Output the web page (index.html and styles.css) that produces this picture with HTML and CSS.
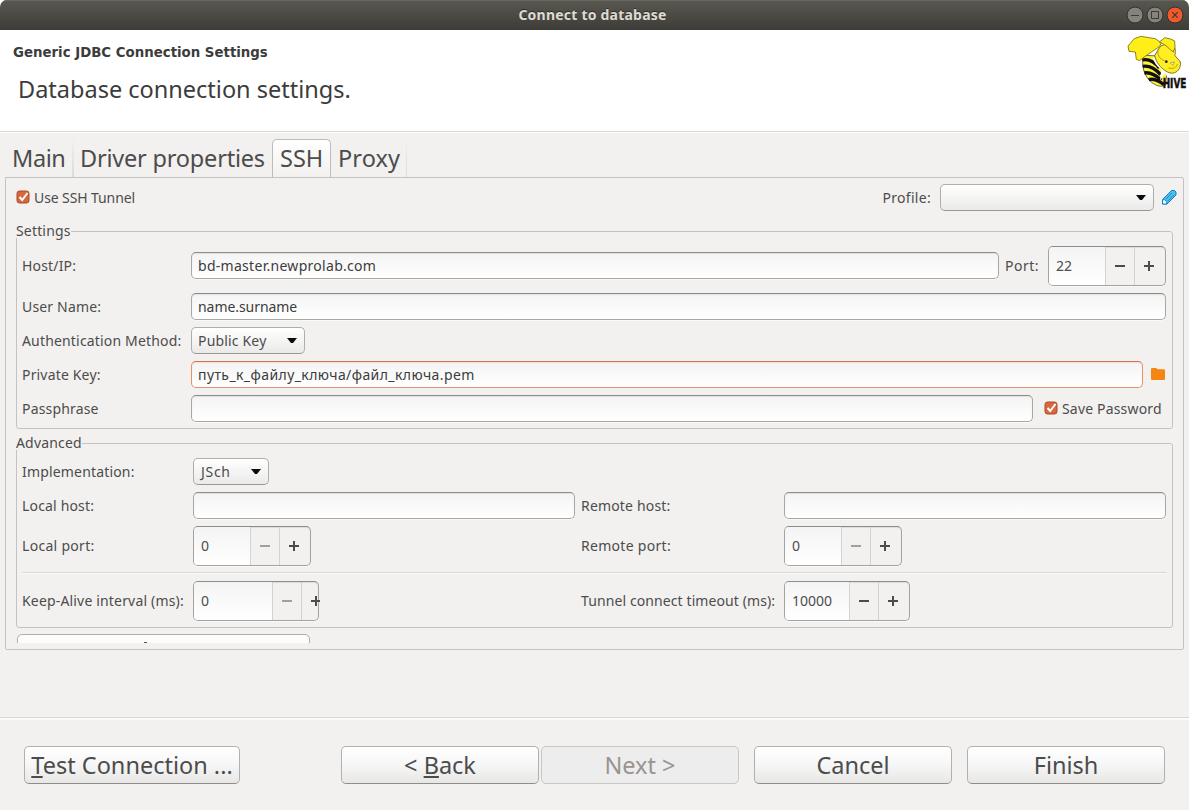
FILE: index.html
```html
<!DOCTYPE html>
<html lang="en">
<head>
<meta charset="utf-8">
<title>Connect to database</title>
<link rel="stylesheet" href="styles.css">
</head>
<body>
<div class="window">
  <header class="titlebar">
    <span class="title">Connect to database</span>
    <div class="controls">
      <svg width="60" height="18" viewBox="0 0 60 18">
        <g stroke="#33322d">
          <circle cx="9" cy="9" r="8" fill="#85837b"/>
          <circle cx="29" cy="9" r="8" fill="#85837b"/>
          <circle cx="49" cy="9" r="8" fill="#f0592c"/>
        </g>
        <g fill="none" stroke="#3b3a35">
          <path d="M5 9.5h8"/>
          <rect x="25.5" y="5.5" width="7" height="7"/>
          <path d="M46.2 6.2l5.6 5.6M51.8 6.2l-5.6 5.6" stroke-width="1.2"/>
        </g>
      </svg>
    </div>
  </header>

  <section class="banner">
    <div>
      <h1>Generic JDBC Connection Settings</h1>
      <p>Database connection settings.</p>
    </div>
    <svg class="logo" width="65" height="62" viewBox="0 0 195 186">
      <path d="M58 70C52 98 58 132 84 152C98 162 112 166 124 160L128 130L110 72Z" fill="#fff23c" stroke="#222" stroke-width="2"/>
      <g fill="none" stroke="#111" stroke-width="10">
        <path d="M55 84C72 80 90 88 106 108"/>
        <path d="M56 103C74 100 94 110 110 128"/>
        <path d="M61 123C80 119 96 130 112 144"/>
        <path d="M74 143C90 138 104 146 120 158"/>
      </g>
      <path d="M86 76C90 92 98 104 112 112L108 146L122 124L132 136L136 112L110 78Z" fill="#fff"/>
      <path d="M92 70L110 42L128 36L148 42C156 48 154 60 153 71L166 86C171 88 171 104 163 114C155 124 140 128 124 116C108 106 96 90 92 70Z" fill="#ffee22" stroke="#665d10" stroke-width="2.5"/>
      <path d="M12 42L18 35L31 20L50 13L94 20L112 33L106 44L72 67L46 86L37 82L34 60L15 58Z" fill="#ffee18" stroke="#776c10" stroke-width="2.5"/>
      <path d="M106 30L114 24L122 17L140 21L152 27L153 46L148 60L136 50L122 38Z" fill="#ffee18" stroke="#776c10" stroke-width="2.5"/>
      <path d="M103 50C98 66 106 82 122 86M133 108C148 112 158 106 160 96" fill="none" stroke="#a19414" stroke-width="2.5"/>
      <ellipse cx="127" cy="89" rx="4" ry="4" fill="#222"/>
      <path d="M139 93L151 90L147 100Z" fill="#fff" stroke="#665e10" stroke-width="1.5"/>
      <text class="logo-text" x="116" y="169" textLength="71" lengthAdjust="spacingAndGlyphs">HIVE</text>
    </svg>
  </section>

  <main>
    <nav class="tabs">
      <span class="tab tab-main">Main</span>
      <span class="tab tab-driver">Driver properties</span>
      <span class="tab tab-ssh active">SSH</span>
      <span class="tab tab-proxy">Proxy</span>
    </nav>

    <div class="panel">
      <div class="row top-row">
        <label class="check tight"><svg class="box" width="14" height="14" viewBox="0 0 14 14"><rect x="1" y="1" width="12" height="12" rx="2.5" fill="#d9663c" stroke="#a84a27"/><path d="M3.5 7l2.7 3L11.5 3" fill="none" stroke="#fff" stroke-width="2"/></svg>Use SSH Tunnel</label>
        <span class="profile-label">Profile:</span>
        <div class="combo combo-profile"><span></span><i class="arrow"></i></div>
        <svg class="pencil" width="15" height="15" viewBox="0 0 15 15">
          <path d="M.5 9.5L9.5 .5H12.5L14 2V5L5 14H.5Z" fill="#53bdea" stroke="#0788c4"/>
          <path d="M.5 9.8H2.8L4.8 11.8V14H.5Z" fill="#fff" stroke="#0788c4"/>
          <path d="M4 9L10 3M5.8 11L12 4.8" stroke="#148fc8" fill="none"/>
        </svg>
      </div>

      <section class="group">
        <h2>Settings</h2>
        <div class="form">
          <div class="row tall"><label class="name">Host/IP:</label><div class="input host">bd-master.newprolab.com</div><span class="port-label">Port:</span><div class="spin"><span>22</span><b class="minus"></b><b class="plus"></b></div></div>
          <div class="row"><label class="name">User Name:</label><div class="input snug">name.surname</div></div>
          <div class="row"><label class="name">Authentication Method:</label><div class="combo combo-auth"><span>Public Key</span><i class="arrow"></i></div></div>
          <div class="row"><label class="name">Private Key:</label><div class="input focus">путь_к_файлу_ключа/файл_ключа.pem</div>
            <svg class="folder" width="16" height="14" viewBox="0 0 16 14"><path d="M1 2Q1 1 2 1H6L8 2.3H14Q15 2.3 15 3.3V12Q15 13 14 13H2Q1 13 1 12Z" fill="#f58613"/></svg></div>
          <div class="row"><label class="name">Passphrase</label><div class="input"></div>
            <label class="check save"><svg class="box" width="14" height="14" viewBox="0 0 14 14"><rect x="1" y="1" width="12" height="12" rx="2.5" fill="#d9663c" stroke="#a84a27"/><path d="M3.5 7l2.7 3L11.5 3" fill="none" stroke="#fff" stroke-width="2"/></svg>Save Password</label></div>
        </div>
      </section>

      <section class="group advanced">
        <h2>Advanced</h2>
        <div class="form">
          <div class="row grid"><label>Implementation:</label><div class="combo combo-impl"><span>JSch</span><i class="arrow"></i></div></div>
          <div class="row grid"><label>Local host:</label><div class="input"></div><label class="second">Remote host:</label><div class="input"></div></div>
          <div class="row grid tall"><label class="airy">Local port:</label><div class="spin"><span>0</span><b class="minus off"></b><b class="plus"></b></div><label class="second airy">Remote port:</label><div class="spin"><span>0</span><b class="minus off"></b><b class="plus"></b></div></div>
        </div>
        <div class="rule"></div>
        <div class="row grid tall"><label>Keep-Alive interval (ms):</label><div class="spin wide cramped"><span>0</span><b class="minus off"></b><b class="plus"></b></div><label class="second timeout">Tunnel connect timeout (ms):</label><div class="spin wide"><span>10000</span><b class="minus"></b><b class="plus"></b></div></div>
      </section>

      <div class="clip"><div class="clipped-button"><i></i></div></div>
    </div>
  </main>

  <footer>
    <button class="test"><u>T</u>est Connection ...</button>
    <button class="back">&lt; <u>B</u>ack</button>
    <button class="next" disabled>Next &gt;</button>
    <button class="cancel">Cancel</button>
    <button class="finish">Finish</button>
  </footer>
</div>
</body>
</html>
```

FILE: styles.css
```css
* { box-sizing: border-box; }

body {
  margin: 0;
  background: #fff;
  color: #4c4c4c;
  font: 14px/20px "Noto Sans", sans-serif;
  letter-spacing: .17px;
}

.window {
  display: flex;
  flex-direction: column;
  width: 1189px;
  height: 810px;
  overflow: hidden;
  border-radius: 7px 7px 0 0;
  background: #f2f1ef;
}

.titlebar {
  display: grid;
  grid-template-columns: 1fr auto 1fr;
  align-items: center;
  height: 30px;
  background: linear-gradient(#595850, #3d3c38);
  box-shadow: inset 0 1px #68665c;
}
.title {
  grid-column: 2;
  color: #dfdbd2;
  font-weight: bold;
  letter-spacing: .22px;
  text-shadow: 0 -1px #2d2c28;
  padding-right: 4px;
}
.controls {
  display: flex;
  justify-content: flex-end;
  padding-right: 3px;
}

.banner {
  display: flex;
  justify-content: space-between;
  height: 103px;
  padding: 2px 0 0 13px;
  background: #fff;
  border-bottom: 1px solid #fbfbfa;
  box-shadow: inset 0 -1px #dcdad8;
}
.banner h1 {
  margin: 11px 0 0;
  color: #3c3c3c;
  font: bold 13.33px/20px "DejaVu Sans", sans-serif;
  letter-spacing: 0;
}
.banner p {
  margin: 9px 0 0 5px;
  color: #3c3c3c;
  font-size: 23.5px;
  line-height: 34px;
  letter-spacing: 0;
}
.logo { overflow: visible; }
.logo-text {
  font: bold 40px "DejaVu Sans Condensed", "DejaVu Sans", sans-serif;
  letter-spacing: 0;
  fill: #111;
  stroke: #111;
  stroke-width: 1.5px;
}

main {
  padding: 6px 5px 0;
  height: 584px;
}

.tabs { display: flex; height: 38px; }
.tab {
  padding: 0 0 0 7px;
  font-size: 23.5px;
  line-height: 38px;
  letter-spacing: -.2px;
  border-right: 2px solid;
  border-image: linear-gradient(#f2f1ef, #dcdad8) 1;
}
.tab-main { width: 69px; letter-spacing: -.4px; }
.tab-driver { width: 198px; padding-left: 6px; border-right: 0; }
.tab-ssh { width: 59px; }
.tab-proxy { width: 76px; border-right-width: 1px; letter-spacing: .1px; }
.tab.active {
  background: linear-gradient(#fff, #f2f1ef);
  border: 1px solid #bebcba;
  border-bottom: 0;
  border-image: none;
  border-radius: 5px 5px 0 0;
  padding-left: 7px;
  line-height: 36px;
  letter-spacing: 0;
}

.panel {
  height: 473px;
  padding: 6px 10px 0;
  border: 1px solid #c5c3c1;
  border-radius: 0 2px 2px 2px;
}

.row { display: flex; align-items: center; height: 27px; }
.row.tall { height: 40px; }
.top-row { margin-bottom: 20px; }

.check { display: flex; align-items: center; gap: 4px; }
.box { flex: none; margin-top: -2px; }
.tight { letter-spacing: -.1px; }
.profile-label { margin: 0 9px 0 auto; letter-spacing: .3px; }
.pencil { margin: 0 -4px 0 8px; }

.group {
  height: 198px;
  padding: 0 6px 0 5px;
  border: 1px solid #c5c3c1;
  border-radius: 3px;
}
.group h2 {
  width: fit-content;
  height: 17px;
  margin: -11px 0 8px -6px;
  background: #f2f1ef;
  font: inherit;
  line-height: 20px;
}
.advanced { height: 185px; margin-top: 14px; }

.form { display: flex; flex-direction: column; gap: 7px; }
.name { flex: none; width: 169px; }
.airy { letter-spacing: .3px; }

.input {
  flex: 1;
  height: 27px;
  padding: 0 6px;
  border: 1px solid #aaa8a5;
  border-top-color: #8d8c89;
  border-radius: 5px;
  background: linear-gradient(#f4f4f4, #fff);
  box-shadow: inset 0 1px 1px #e2e2e2, 0 1px #f9f9f8;
  color: #3c3c3c;
  line-height: 25px;
}
.host { margin-bottom: 1px; letter-spacing: .29px; }
.snug { letter-spacing: -.06px; }
.focus {
  border-color: #eb8f69;
  border-top-color: #d9714a;
  letter-spacing: .41px;
  box-shadow: inset 0 1px 1px #f2dfd8;
}
.port-label { width: 49px; padding-left: 6px; letter-spacing: .5px; }
.folder { margin: -1px 0 0 7px; }
.save { width: 133px; padding-left: 11px; }

.combo {
  display: flex;
  align-items: center;
  justify-content: space-between;
  height: 27px;
  padding: 0 7px 0 6px;
  border: 1px solid #b0aeab;
  border-bottom-color: #999794;
  border-radius: 5px;
  background: linear-gradient(#fff, #ebeae9);
}
.combo-profile { width: 214px; }
.combo-auth { width: 114px; }
.combo-impl { width: 76px; padding-left: 7px; letter-spacing: .7px; }
.arrow {
  width: 10px;
  height: 5px;
  background: #0c0c0c;
  clip-path: polygon(0 0, 100% 0, 60% 100%, 40% 100%);
}

.spin {
  display: grid;
  grid-template-columns: 1fr 29px 31px;
  width: 118px;
  height: 40px;
  border: 1px solid #a5a39f;
  border-top-color: #8d8c89;
  border-radius: 5px;
  background: #f2f1ef;
  box-shadow: inset 0 1px 1px #dddcda, 0 1px #f9f9f8;
  letter-spacing: 0;
}
.spin span {
  padding-left: 7px;
  line-height: 38px;
  border-radius: 4px 0 0 4px;
  background: linear-gradient(#f4f4f4, #fff);
}
.spin b {
  border-left: 1px solid #d5d3d0;
  background: linear-gradient(#4c4c4c, #4c4c4c) 9px 18px / 10px 2px no-repeat;
}
.spin .off { background-image: linear-gradient(#a39f9b, #a39f9b); }
.spin .plus {
  background:
    linear-gradient(#4c4c4c, #4c4c4c) 9px 18px / 10px 2px no-repeat,
    linear-gradient(#4c4c4c, #4c4c4c) 13px 14px / 2px 10px no-repeat;
}
.spin.wide { width: 126px; }
.cramped { grid-template-columns: 78px 29px 19px; }

.grid {
  display: grid;
  grid-template-columns: 171px 382px 209px 382px;
}
.second { padding-left: 6px; }
.timeout { letter-spacing: .1px; }

.rule {
  height: 2px;
  margin: 6px -1px 7px 0;
  border-top: 1px solid #dad8d6;
  border-bottom: 1px solid #faf9f8;
}

.clip { height: 9px; margin: 6px 0 0 1px; overflow: hidden; }
.clipped-button {
  width: 293px;
  height: 30px;
  padding: 7px 0 0 126px;
  border: 1px solid #b0aeab;
  border-radius: 5px;
  background: #fcfcfc;
}
.clipped-button i { display: block; width: 3px; height: 1px; background: #555; }

footer {
  display: flex;
  height: 93px;
  padding: 28px 24px 0;
  border-top: 1px solid #dad8d6;
  box-shadow: inset 0 2px #fafaf9;
}
button {
  width: 198px;
  height: 38px;
  padding: 0;
  border: 1px solid #b2b0ad;
  border-bottom-color: #8f8d8a;
  border-radius: 5px;
  background: linear-gradient(#fff, #f6f6f6 50%, #e8e7e6);
  color: #4c4c4c;
  font: 23.5px/34px "Noto Sans", sans-serif;
  letter-spacing: 0;
}
button u { text-decoration-thickness: 2px; text-underline-offset: 2px; }
.test { width: 216px; margin-right: 101px; }
.back { margin-right: 2px; }
.next { border-color: #c9c7c5; background: #eeeded; color: #999490; }
.cancel { margin: 0 15px; }
```
